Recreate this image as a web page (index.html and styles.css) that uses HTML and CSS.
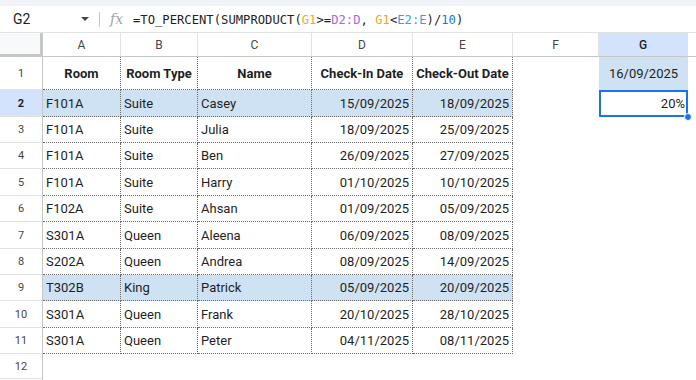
FILE: index.html
```html
<!DOCTYPE html>
<html>
<head>
<meta charset="utf-8">
<link rel="stylesheet" href="styles.css">
</head>
<body>
<div class="topband"></div>
<div class="fbar">
  <div class="namebox"><span class="ref">G2</span><span class="caret"></span></div>
  <div class="sep"></div>
  <div class="fx">fx</div>
  <div class="formula">=TO_PERCENT(SUMPRODUCT(<span class="c1">G1</span>&gt;=<span class="c2">D2:D</span>, <span class="c1">G1</span>&lt;<span class="c3">E2:E</span>)/<span class="c4">10</span>)</div>
</div>
<div class="sheet">
  <div class="corner"></div>
  <div class="ch">A</div><div class="ch">B</div><div class="ch">C</div><div class="ch">D</div><div class="ch">E</div><div class="ch">F</div><div class="ch sel">G</div><div class="ch last"></div>

  <div class="rh">1</div>
  <div class="c h">Room</div><div class="c h">Room Type</div><div class="c h">Name</div><div class="c h">Check-In Date</div><div class="c h">Check-Out Date</div><div class="e"></div><div class="e g1">16/09/2025</div><div class="e"></div>

  <div class="rh sel">2</div>
  <div class="c hl">F101A</div><div class="c hl">Suite</div><div class="c hl">Casey</div><div class="c hl r">15/09/2025</div><div class="c hl r">18/09/2025</div><div class="e"></div><div class="e active">20%<span class="handle"></span></div><div class="e"></div>

  <div class="rh">3</div>
  <div class="c">F101A</div><div class="c">Suite</div><div class="c">Julia</div><div class="c r">18/09/2025</div><div class="c r">25/09/2025</div><div class="e"></div><div class="e"></div><div class="e"></div>

  <div class="rh">4</div>
  <div class="c">F101A</div><div class="c">Suite</div><div class="c">Ben</div><div class="c r">26/09/2025</div><div class="c r">27/09/2025</div><div class="e"></div><div class="e"></div><div class="e"></div>

  <div class="rh">5</div>
  <div class="c">F101A</div><div class="c">Suite</div><div class="c">Harry</div><div class="c r">01/10/2025</div><div class="c r">10/10/2025</div><div class="e"></div><div class="e"></div><div class="e"></div>

  <div class="rh">6</div>
  <div class="c">F102A</div><div class="c">Suite</div><div class="c">Ahsan</div><div class="c r">01/09/2025</div><div class="c r">05/09/2025</div><div class="e"></div><div class="e"></div><div class="e"></div>

  <div class="rh">7</div>
  <div class="c">S301A</div><div class="c">Queen</div><div class="c">Aleena</div><div class="c r">06/09/2025</div><div class="c r">08/09/2025</div><div class="e"></div><div class="e"></div><div class="e"></div>

  <div class="rh">8</div>
  <div class="c">S202A</div><div class="c">Queen</div><div class="c">Andrea</div><div class="c r">08/09/2025</div><div class="c r">14/09/2025</div><div class="e"></div><div class="e"></div><div class="e"></div>

  <div class="rh">9</div>
  <div class="c hl">T302B</div><div class="c hl">King</div><div class="c hl">Patrick</div><div class="c hl r">05/09/2025</div><div class="c hl r">20/09/2025</div><div class="e"></div><div class="e"></div><div class="e"></div>

  <div class="rh">10</div>
  <div class="c">S301A</div><div class="c">Queen</div><div class="c">Frank</div><div class="c r">20/10/2025</div><div class="c r">28/10/2025</div><div class="e"></div><div class="e"></div><div class="e"></div>

  <div class="rh">11</div>
  <div class="c">S301A</div><div class="c">Queen</div><div class="c">Peter</div><div class="c r">04/11/2025</div><div class="c r">08/11/2025</div><div class="e"></div><div class="e"></div><div class="e"></div>

  <div class="rh">12</div>
  <div class="e"></div><div class="e"></div><div class="e"></div><div class="e"></div><div class="e"></div><div class="e"></div><div class="e"></div><div class="e"></div>

  <div class="rh">13</div>
  <div class="e"></div><div class="e"></div><div class="e"></div><div class="e"></div><div class="e"></div><div class="e"></div><div class="e"></div><div class="e"></div>
</div>
</body>
</html>
```

FILE: styles.css
```css
* { box-sizing: border-box; }
html, body { margin: 0; padding: 0; background: #fff; overflow: hidden; }
body { font-family: Roboto, "Liberation Sans", sans-serif; color: #1f1f1f; width: 696px; height: 380px; }

.topband { height: 6px; background: #f0f4f9; }

.fbar {
  height: 27px;
  display: flex;
  align-items: center;
  border-bottom: 1px solid #e1e3e1;
  background: #fff;
}
.namebox {
  width: 99px;
  display: flex;
  align-items: center;
  justify-content: space-between;
  padding: 0 10px 0 13px;
}
.ref { font-size: 14px; color: #1f1f1f; }
.caret {
  width: 0; height: 0;
  border-left: 4px solid transparent;
  border-right: 4px solid transparent;
  border-top: 4px solid #444746;
}
.sep { width: 1px; height: 15px; background: #c7c7c7; }
.fx {
  margin-left: 10px;
  width: 23px;
  font-family: "DejaVu Serif", serif;
  font-style: italic;
  font-size: 14px;
  color: #a0a4a8;
}
.formula {
  font-family: "DejaVu Sans Mono", "Liberation Mono", monospace;
  font-size: 12.2px;
  color: #1f1f1f;
  white-space: pre;
  padding-top: 1px;
}
.c1 { color: #f5a524; }
.c2 { color: #a46cd8; }
.c3 { color: #2ba8e0; }
.c4 { color: #1a73e8; }

.sheet {
  display: grid;
  grid-template-columns: 43px 78px 77px 114px 101px 100px 86px 89px 1fr;
  grid-template-rows: 24px 33px 27px 26px 26px 27px 26px 27px 26px 26px 27px 26px 25px 20px;
  font-size: 13px;
}

.corner {
  background: #f8f9fa;
  border-right: 3px solid #c4c7c5;
  border-bottom: 3px solid #c4c7c5;
}
.ch {
  display: flex; align-items: center; justify-content: center;
  font-size: 12px; color: #444746;
  border-right: 1px solid #e1e3e1;
  border-bottom: 1px solid #c4c7c5;
}
.ch.sel { background: #d3e3fd; font-weight: 500; color: #1f1f1f; }
.ch.last { border-right: none; }

.rh {
  display: flex; align-items: center; justify-content: center;
  font-size: 11px; color: #444746;
  border-right: 1px solid #c4c7c5;
  border-bottom: 1px solid #e1e3e1;
}
.rh.sel { background: #d3e3fd; font-weight: 700; color: #1f1f1f; }

.c {
  display: flex; align-items: center;
  padding: 0 3px;
  white-space: nowrap;
  overflow: hidden;
  border-right: 1px dotted #6b6b6b;
  border-bottom: 1px dotted #6b6b6b;
}
.c.h { justify-content: center; font-weight: 700; }
.c.r { justify-content: flex-end; }
.c.hl { background: #cfe2f3; }

.e {
  display: flex; align-items: center;
  padding: 0 3px;
}
.e.g1 { background: #cfe2f3; justify-content: center; }
.e.active {
  position: relative;
  justify-content: flex-end;
  box-shadow: inset 0 0 0 2px #1a73e8;
}
.handle {
  position: absolute;
  right: -4px; bottom: -4px;
  width: 8px; height: 8px;
  border-radius: 50%;
  background: #1a73e8;
  border: 1px solid #fff;
}
```
